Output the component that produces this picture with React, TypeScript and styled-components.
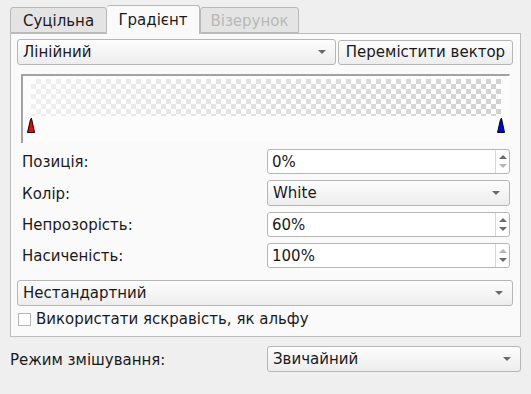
import React from "react";
import styled, { createGlobalStyle } from "styled-components";

const GlobalStyle = createGlobalStyle`
  body {
    margin: 0;
    background: #efefef;
    font-family: "DejaVu Sans", "Noto Sans", sans-serif;
    font-size: 15px;
    color: #1a1a1a;
  }
`;

const Page = styled.div`
  width: 531px;
  height: 394px;
  padding: 5px 10px 0 10px;
  box-sizing: border-box;
`;

const TabBar = styled.div`
  display: flex;
  align-items: flex-end;
  height: 28px;
  position: relative;
  z-index: 1;
`;

const Tab = styled.div<{ $w: number; $active?: boolean; $disabled?: boolean }>`
  box-sizing: border-box;
  width: ${(p) => p.$w}px;
  height: ${(p) => (p.$active ? "29px" : "26px")};
  margin-bottom: ${(p) => (p.$active ? "-1px" : "0")};
  display: flex;
  align-items: center;
  justify-content: center;
  border: 1px solid #b9b9b9;
  border-left: ${(p) => (p.$active ? "none" : "1px solid #b9b9b9")};
  border-bottom: ${(p) => (p.$active ? "none" : "1px solid #b9b9b9")};
  border-radius: 3px 3px 0 0;
  background: ${(p) => (p.$active ? "#fafafa" : "#e4e4e4")};
  color: ${(p) => (p.$disabled ? "#b8b8b8" : "#1a1a1a")};
  padding-top: ${(p) => (p.$active ? "0" : "2px")};
`;

const Panel = styled.div`
  box-sizing: border-box;
  width: 511px;
  border: 1px solid #bcbcbc;
  background: #fafafa;
  padding: 5px 7px 8px 6px;
  display: flex;
  flex-direction: column;
`;

const TopRow = styled.div`
  display: flex;
  gap: 2px;
  align-items: center;
`;

const Combo = styled.div<{ $w?: number }>`
  box-sizing: border-box;
  height: 26px;
  flex: none;
  ${(p) => (p.$w ? `width: ${p.$w}px;` : "width: 100%;")}
  border: 1px solid #b6b6b6;
  border-radius: 3px;
  background: linear-gradient(#fdfdfd, #ededed);
  display: flex;
  align-items: center;
  justify-content: space-between;
  padding: 0 9px 0 5px;
`;

const Arrow = styled.span`
  width: 0;
  height: 0;
  border-left: 4px solid transparent;
  border-right: 4px solid transparent;
  border-top: 4px solid #6a6a6a;
`;

const Button = styled.div`
  box-sizing: border-box;
  height: 25px;
  width: 176px;
  border: 1px solid #b6b6b6;
  border-radius: 3px;
  background: linear-gradient(#fdfdfd, #ededed);
  display: flex;
  align-items: center;
  justify-content: center;
`;

const GradientFrame = styled.div`
  box-sizing: border-box;
  margin: 9px 3px 0 4px;
  height: 69px;
  border-top: 2px solid #a2a2a2;
  border-left: 2px solid #a2a2a2;
  border-right: 1px solid #fbfbfb;
  background: #fcfcfc;
  padding: 3px 8px 0 8px;
  display: flex;
  flex-direction: column;
`;

const Checker = styled.div`
  height: 37px;
  background-color: #ffffff;
  background-image: linear-gradient(to right, rgba(255, 255, 255, 0.65), rgba(255, 255, 255, 0)),
    conic-gradient(#d2d2d2 25%, #ffffff 0 50%, #d2d2d2 0 75%, #ffffff 0);
  background-size: 100% 100%, 10px 10px;
`;

const Stops = styled.div`
  display: flex;
  justify-content: space-between;
  margin: 2px -4px 0 -4px;
`;

const Marker = ({ color }: { color: string }) => (
  <svg width="8" height="15" viewBox="0 0 8 15">
    <path d="M4 0.5 L4.5 0.5 L7.5 14.5 L0.5 14.5 L3.5 1.5 Z" fill={color} stroke="#000" strokeWidth="1" />
  </svg>
);

const Form = styled.div`
  display: grid;
  grid-template-columns: 245px 243px;
  row-gap: 6px;
  margin: 6px 3px 0 5px;
  align-items: center;
`;

const Label = styled.div`
  padding-top: 1px;
`;

const Spin = styled.div`
  box-sizing: border-box;
  height: 25px;
  border: 1px solid #b6b6b6;
  border-radius: 3px;
  background: #ffffff;
  display: flex;
  align-items: stretch;
`;

const SpinText = styled.div`
  flex: 1;
  display: flex;
  align-items: center;
  padding-left: 4px;
`;

const SpinButtons = styled.div`
  width: 13px;
  border-left: 1px solid #d6d6d6;
  display: flex;
  flex-direction: column;
  align-items: center;
  justify-content: center;
  gap: 5px;
`;

const Tri = styled.span<{ $up?: boolean; $off?: boolean }>`
  width: 0;
  height: 0;
  border-left: 4px solid transparent;
  border-right: 4px solid transparent;
  ${(p) =>
    p.$up
      ? `border-bottom: 4px solid ${p.$off ? "#b8b8b8" : "#6a6a6a"};`
      : `border-top: 4px solid ${p.$off ? "#b8b8b8" : "#6a6a6a"};`}
`;

const ModeCombo = styled(Combo)`
  margin: 12px 0 0 0;
`;

const CheckRow = styled.label`
  display: flex;
  align-items: center;
  gap: 5px;
  margin: 4px 0 0 1px;
`;

const Box = styled.span`
  box-sizing: border-box;
  width: 13px;
  height: 13px;
  border: 1px solid #b6b6b6;
  background: #ffffff;
`;

const BlendRow = styled.div`
  display: flex;
  align-items: center;
  justify-content: space-between;
  margin-top: 9px;
  width: 511px;
`;

const SpinBox = ({ value, up = true, down = true }: { value: string; up?: boolean; down?: boolean }) => (
  <Spin>
    <SpinText>{value}</SpinText>
    <SpinButtons>
      <Tri $up $off={!up} />
      <Tri $off={!down} />
    </SpinButtons>
  </Spin>
);

export default function App() {
  return (
    <Page>
      <GlobalStyle />
      <TabBar>
        <Tab $w={97}>Суцільна</Tab>
        <Tab $w={93} $active>Градієнт</Tab>
        <Tab $w={99} $disabled>Візерунок</Tab>
      </TabBar>
      <Panel>
        <TopRow>
          <Combo $w={319}>
            Лінійний
            <Arrow />
          </Combo>
          <Button>Перемістити вектор</Button>
        </TopRow>
        <GradientFrame>
          <Checker />
          <Stops>
            <Marker color="#ff0000" />
            <Marker color="#0000ff" />
          </Stops>
        </GradientFrame>
        <Form>
          <Label>Позиція:</Label>
          <SpinBox value="0%" down={false} />
          <Label>Колір:</Label>
          <Combo>
            White
            <Arrow />
          </Combo>
          <Label>Непрозорість:</Label>
          <SpinBox value="60%" />
          <Label>Насиченість:</Label>
          <SpinBox value="100%" up={false} />
        </Form>
        <ModeCombo>
          Нестандартний
          <Arrow />
        </ModeCombo>
        <CheckRow>
          <Box />
          Використати яскравість, як альфу
        </CheckRow>
      </Panel>
      <BlendRow>
        <Label>Режим змішування:</Label>
        <Combo $w={254}>
          Звичайний
          <Arrow />
        </Combo>
      </BlendRow>
    </Page>
  );
}
